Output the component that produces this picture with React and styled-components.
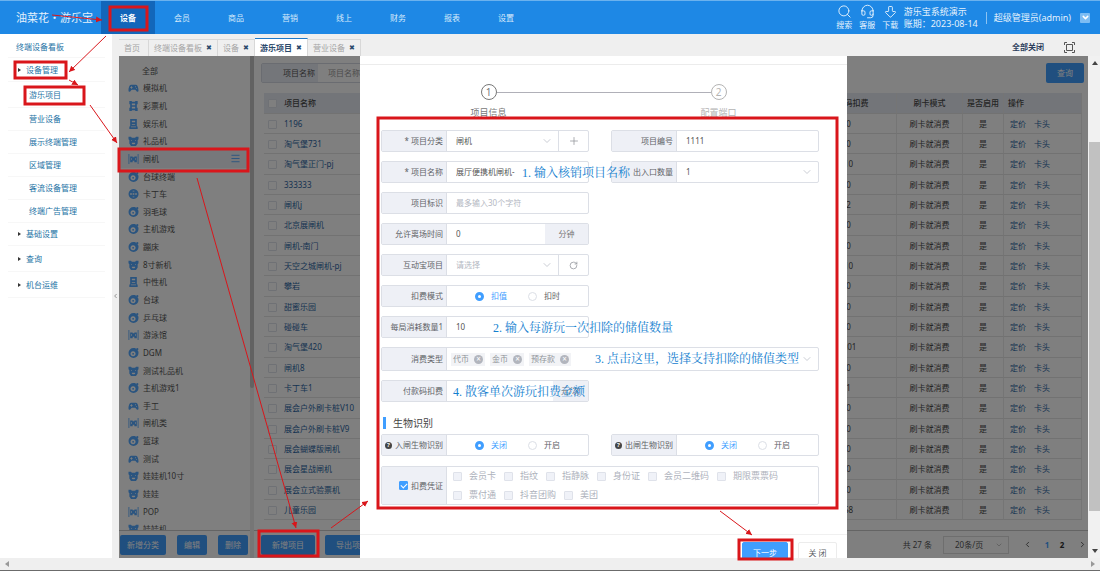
import React from 'react';
import styled, { createGlobalStyle } from 'styled-components';
import { Search, Headset, ArrowBigDown, ChevronDown, ChevronLeft, ChevronRight, Plus, RotateCw, Menu } from 'lucide-react';

const GlobalStyle = createGlobalStyle`
  * { box-sizing: border-box; }
  body { margin: 0; }
  body, button, input, select {
    font-family: "Noto Sans", "Noto Sans CJK SC", sans-serif;
    font-size: 8px;
    line-height: 12px;
    color: #555;
  }
  button, input, select { margin: 0; padding: 0; border: 0; background: none; outline: none; }
  a { text-decoration: none; }
  ul { list-style: none; margin: 0; padding: 0; }
`;

const Page = styled.div`
  position: relative;
  display: flex;
  flex-direction: column;
  height: 100vh;
  overflow: hidden;
  background: #fff;
`;

/* header */

const Header = styled.header`
  display: flex;
  flex: none;
  height: 34px;
  border-top: 1px solid #6bb2ee;
  background: #1e88e5;
  color: #e4f1fc;
`;

const Brand = styled.div`
  width: 101px;
  padding-left: 16px;
  font-size: 11px;
  line-height: 33px;
  white-space: nowrap;
`;

const Nav = styled.nav`
  display: flex;
`;

const NavLink = styled.a`
  width: 54px;
  line-height: 34px;
  text-align: center;
  color: ${props => (props.$active ? '#fff' : '#d6eafb')};
  font-weight: ${props => (props.$active ? 'bold' : 'normal')};
  background: ${props => (props.$active ? '#1266ba' : 'transparent')};
`;

const HeaderTools = styled.div`
  display: flex;
  align-items: center;
  margin-left: auto;
  padding-right: 10px;
`;

const ToolButton = styled.button`
  display: flex;
  flex-direction: column;
  align-items: center;
  width: 23px;
  color: #e4f1fc;
`;

const SystemInfo = styled.div`
  margin-left: 2px;
  padding-right: 8px;
  font-size: 9px;
  white-space: nowrap;
`;

const UserInfo = styled.div`
  display: flex;
  align-items: center;
  gap: 9px;
  padding-left: 7px;
  border-left: 1px solid #8cc3f2;
  font-size: 9px;
  white-space: nowrap;
`;

const UserMenu = styled.button`
  display: flex;
  align-items: center;
  justify-content: center;
  width: 10px;
  height: 10px;
  border-radius: 1px;
  background: #7cbcf3;
  color: #fff;
`;

/* side menu */

const Body = styled.div`
  display: flex;
  flex: 1;
  min-height: 0;
`;

const Sidebar = styled.aside`
  flex: none;
  width: 112px;
  padding: 2px 7px 0 8px;
`;

const MenuItem = styled.li`
  display: flex;
  align-items: center;
  height: ${props => props.$height}px;
  padding-left: ${props => ({ top: 8, group: 10, child: 21 })[props.$kind]}px;
  border-bottom: 1px solid #f7f7f7;

  a { color: #2573a5; }
`;

const Caret = styled.span`
  width: 3px;
  height: 4px;
  margin-right: 5px;
  border-left: 3px solid #333;
  border-top: 2px solid transparent;
  border-bottom: 2px solid transparent;
`;

const Collapse = styled.button`
  display: flex;
  align-items: center;
  justify-content: center;
  flex: none;
  width: 7px;
  background: #efefef;
`;

const Main = styled.main`
  display: flex;
  flex-direction: column;
  flex: 1;
  min-width: 0;
`;

const TabBar = styled.div`
  display: flex;
  align-items: flex-end;
  flex: none;
  height: 22px;
  background: #efefef;
`;

const Tab = styled.div`
  display: flex;
  align-items: center;
  gap: 4px;
  height: 17px;
  padding: 0 ${props => (props.$closable ? 5 : 8)}px 0 5px;
  border: 1px solid #d8d8d8;
  border-width: 1px 1px 0 0;
  white-space: nowrap;
  color: ${props => (props.$active ? '#2b4a6c' : '#a5a5a5')};
  font-weight: ${props => (props.$active ? 'bold' : 'normal')};
  ${props => props.$active && 'height: 18px; background: #fff; border-top: 1px solid #1e78c8;'}

  button { color: #2b4a6c; font-size: 7px; }
`;

const TabActions = styled.div`
  display: flex;
  align-items: center;
  gap: 20px;
  height: 18px;
  margin-left: auto;
  padding-right: 25px;

  button { display: flex; color: #2b3d5c; font-weight: bold; }
`;

const Content = styled.div`
  display: flex;
  flex: 1;
  min-height: 0;
`;

const Workspace = styled.div`
  position: relative;
  display: flex;
  flex: 1;
  min-width: 0;
  overflow: hidden;
`;

/* category list */

const Categories = styled.section`
  display: flex;
  flex-direction: column;
  flex: none;
  width: 131px;
`;

const CategoryScroll = styled.div`
  flex: 1;
  min-height: 0;
  overflow: hidden;
  padding-top: 6px;
`;

const CategoryList = styled.ul`
  display: grid;
  grid-template-rows: repeat(27, 1fr);
  height: 476px;
`;

const Category = styled.li`
  display: flex;
  align-items: center;
  gap: 4px;
  padding: 0 9px;
  color: #555;
  background: ${props => (props.$active ? '#eef1f6' : 'transparent')};

  svg { flex: none; color: #55a8ff; }
  svg:last-child:not(:first-child) { margin-left: auto; }
`;

const IconGap = styled.span`
  width: 10px;
`;

const ActionBar = styled.div`
  display: flex;
  align-items: center;
  flex: none;
  height: 28px;
  padding-left: ${props => props.$left}px;
  gap: ${props => props.$gap}px;
  border-top: 1px solid #c8c8c8;
`;

const PrimaryButton = styled.button`
  height: 20px;
  padding: 0 ${props => props.$pad}px;
  border-radius: 2px;
  background: #409eff;
  color: #fff;
  white-space: nowrap;
`;

const Splitter = styled.div`
  flex: none;
  width: 4px;
  background: #ececec;

  div { height: 332px; background: #c4c4c4; border-radius: 0 0 2px 2px; }
`;

/* project table */

const Projects = styled.section`
  display: flex;
  flex-direction: column;
  flex: 1;
  min-width: 0;
`;

const Toolbar = styled.div`
  display: flex;
  justify-content: space-between;
  padding: 7px 4px 10px 7px;
`;

const SearchField = styled.div`
  display: flex;
  width: 220px;
  height: 20px;
  border: 1px solid #d5d9e2;
  border-radius: 2px;

  label { width: 56px; padding-right: 3px; line-height: 18px; text-align: right; background: #e9edf4; }
  input { flex: 1; min-width: 0; padding-left: 10px; }
  input::placeholder { color: #999; }
`;

const TableArea = styled.div`
  flex: 1;
  min-height: 0;
  overflow: hidden;
  padding: 0 6px 0 10px;
`;

const Table = styled.table`
  width: 100%;
  table-layout: fixed;
  border-collapse: separate;
  border-spacing: 0;
  white-space: nowrap;

  th, td {
    height: 20px;
    padding: 0;
    border-bottom: 1px solid #e4e4e4;
    border-right: 1px solid #eaeaea;
    text-align: center;
    color: #4a4a4a;
  }
  th { height: 21px; background: #e6ebf3; font-weight: 500; }
  tr:nth-child(3n) td { height: 21px; }
  th:nth-child(1), td:nth-child(1) { border-right: 0; }
  th:nth-child(2), td:nth-child(2), th:nth-child(6), td:nth-child(6) { text-align: left; padding-left: 4px; }
  td:nth-child(6) { padding-left: 6px; }
  a { color: #2d66a3; }
  a + a { margin-left: 8px; }
`;

const Check = styled.input.attrs({ type: 'checkbox' })`
  appearance: none;
  display: inline-block;
  flex: none;
  width: 9px;
  height: 9px;
  border: 1px solid #dfe2ea;
  border-radius: 1px;
  background: ${props => props.$fill || '#fff'};
  vertical-align: middle;

  &:checked {
    border-color: #409eff;
    background: #409eff;
  }
  &:checked::after {
    content: "";
    display: block;
    width: 5px;
    height: 3px;
    margin: 1px;
    border: solid #fff;
    border-width: 0 0 1px 1px;
    transform: rotate(-45deg);
  }
`;

const Pager = styled.div`
  display: flex;
  align-items: center;
  margin-left: auto;
  height: 100%;
  white-space: nowrap;

  button { width: 12px; margin-right: 3px; font-weight: bold; color: #303133; }
  button svg { display: block; margin: 0 auto; }
  button:first-of-type { margin-right: 8px; }
  button:last-of-type { margin: 0 0 0 5px; }
  button[aria-current] { color: #409eff; }
`;

const PageSize = styled.div`
  display: flex;
  align-items: center;
  width: 66px;
  height: 18px;
  margin: 0 12px 0 11px;
  border: 1px solid #ddd;
  padding: 0 5px 0 11px;

  select { appearance: none; flex: 1; }
`;

/* dialog */

const Overlay = styled.div`
  position: absolute;
  inset: 0;
  display: flex;
  justify-content: center;
  background: rgba(0, 0, 0, 0.5);
`;

const Dialog = styled.section`
  display: flex;
  flex-direction: column;
  width: 487px;
  padding-top: 8px;
  background: #fff;
`;

const Steps = styled.ol`
  display: flex;
  flex: none;
  height: 53px;
  margin: 0;
  padding: 19px 0 0;
  overflow: hidden;
  border-top: 1px solid #ececec;
  list-style: none;
  justify-content: center;
`;

const Step = styled.li`
  display: flex;
  flex-direction: column;
  align-items: center;
  gap: 7px;
  width: 40px;
  font-size: 9px;
  color: ${props => (props.$active ? '#777' : '#b4b4b4')};

  b {
    width: 16px;
    height: 16px;
    border: 1px solid currentColor;
    border-radius: 50%;
    font-weight: normal;
    font-size: 10px;
    line-height: 14px;
    text-align: center;
  }
`;

const StepLine = styled.li`
  width: 214px;
  height: 1px;
  margin: 8px -12px 0;
  background: #b0b0b8;
`;

const Form = styled.form`
  flex: 1;
  min-height: 0;
  padding: 13px 28px 0 21px;
`;

const Fields = styled.div`
  display: grid;
  grid-template-columns: repeat(2, minmax(0, 1fr));
  gap: 9px 22px;
`;

const Field = styled.div`
  position: relative;
  display: flex;
  grid-column: ${props => ({ left: '1', right: '2', full: '1 / -1' })[props.$col || 'left']};
  height: ${props => props.$height || 22}px;
  border: 1px solid #dcdfe6;
  border-radius: 2px;
`;

const FieldLabel = styled.div`
  display: flex;
  align-items: center;
  justify-content: flex-end;
  gap: 3px;
  flex: none;
  width: 65px;
  padding-right: 3px;
  border-right: 1px solid #dcdfe6;
  background: #eef0f6;
  color: #606266;
  white-space: nowrap;
`;

const TextInput = styled.input`
  flex: 1;
  min-width: 0;
  padding-left: 9px;

  &::placeholder { color: #b4b8c2; }
`;

const Select = styled.select`
  appearance: none;
  flex: 1;
  min-width: 0;
  padding-left: 9px;
  color: ${props => (props.$empty ? '#b4b8c2' : '#555')};
`;

const Arrow = styled(ChevronDown).attrs({ size: 12, strokeWidth: 1.5, color: '#b8bcc6' })`
  flex: none;
  align-self: center;
  margin-right: 5px;
`;

const SideButton = styled.button.attrs({ type: 'button' })`
  display: flex;
  align-items: center;
  justify-content: center;
  width: 30px;
  border-left: 1px solid #dcdfe6;
  color: #909399;
`;

const Unit = styled.span`
  display: flex;
  align-items: center;
  justify-content: center;
  flex: none;
  width: ${props => props.$width}px;
  background: #eef0f6;
  color: #777;
`;

const RadioGroup = styled.div`
  display: flex;
  align-items: center;
  gap: 21px;
  padding-left: 28px;
`;

const RadioLabel = styled.label`
  display: flex;
  align-items: center;
  gap: 7px;
  color: ${props => (props.$on ? '#409eff' : '#606266')};

  input {
    appearance: none;
    width: 9px;
    height: 9px;
    border: 1px solid #dcdfe6;
    border-radius: 50%;
  }
  input:checked { border: 3px solid #409eff; }
`;

const Tags = styled.div`
  display: flex;
  align-items: center;
  flex: 1;
  gap: 5px;
  padding-left: 4px;
`;

const Tag = styled.span`
  display: flex;
  align-items: center;
  gap: 5px;
  height: 13px;
  padding: 0 2px;
  background: #f2f3f6;
  color: #909399;

  button {
    width: 9px;
    height: 9px;
    border-radius: 50%;
    background: #b2b5bd;
    color: #fff;
    line-height: 8px;
  }
`;

const SectionTitle = styled.h3`
  margin: 15px 0 5px 2px;
  padding-left: 7px;
  border-left: 3px solid #409eff;
  font-size: 10px;
  font-weight: normal;
  line-height: 12px;
  color: #444;
`;

const Help = styled.span`
  width: 7px;
  height: 7px;
  border-radius: 50%;
  background: #444;
  color: #fff;
  font-size: 6px;
  font-weight: bold;
  line-height: 7px;
  text-align: center;
`;

const CheckGroup = styled.div`
  display: flex;
  flex-wrap: wrap;
  align-content: center;
  flex: 1;
  column-gap: 8px;
  padding-left: 6px;

  label {
    display: flex;
    align-items: center;
    gap: 7px;
    height: 19px;
    font-size: 9px;
    color: #aeb2bc;
  }
`;

const Credential = styled.div`
  margin-top: 10px;
`;

const DialogFooter = styled.footer`
  display: flex;
  flex: none;
  gap: 10px;
  justify-content: flex-end;
  align-items: flex-start;
  height: 24px;
  padding: 7px 10px 0 0;
  border-top: 1px solid #f0f0f0;
  overflow: hidden;
`;

const FooterButton = styled.button`
  flex: none;
  width: ${props => (props.$primary ? 46 : 39)}px;
  height: 22px;
  border: 1px solid ${props => (props.$primary ? '#409eff' : '#ececec')};
  border-radius: 2px;
  background: ${props => (props.$primary ? '#409eff' : '#fff')};
  color: ${props => (props.$primary ? '#fff' : '#606266')};
`;

const Note = styled.span`
  position: absolute;
  z-index: 1;
  top: 0;
  left: ${props => props.$left}px;
  font-family: "Liberation Serif", "Noto Serif CJK SC", "Noto Sans CJK SC", serif;
  font-size: 12px;
  line-height: 22px;
  white-space: nowrap;
  color: #1480cf;
`;

/* scroll bars */

const VerticalScroll = styled.div`
  display: flex;
  flex-direction: column;
  align-items: center;
  justify-content: space-between;
  flex: none;
  width: 12px;
  padding: 4px 0 4px 1px;
  background: #f1f1f1;

  div { width: 100%; height: 369px; margin-top: 39px; background: #c1c1c1; }
`;

const HorizontalScroll = styled.div`
  display: flex;
  align-items: center;
  justify-content: space-between;
  flex: none;
  height: 13px;
  padding: 0 4px;
  border-bottom: 1px solid #6b6b6b;
  background: #efefef;
`;

const Marks = styled.svg`
  position: absolute;
  top: 0;
  left: 0;
  pointer-events: none;
`;

const navItems = ['设备', '会员', '商品', '营销', '线上', '财务', '报表', '设置'];

const menu = [
  ['终端设备看板', 'top', 22],
  ['设备管理', 'group', 24],
  ['游乐项目', 'child', 26],
  ['营业设备', 'child', 23],
  ['展示终端管理', 'child', 23],
  ['区域管理', 'child', 23],
  ['客流设备管理', 'child', 23],
  ['终端广告管理', 'child', 23],
  ['基础设置', 'group', 23],
  ['查询', 'group', 26],
  ['机台运维', 'group', 26],
];

const tabs = ['首页', '终端设备看板', '设备', '游乐项目', '营业设备'];

const categories = [
  ['全部'], ['模拟机', 'game'], ['彩票机', 'ticket'], ['娱乐机', 'machine'], ['礼品机', 'bear'],
  ['闸机', 'gate'], ['台球终端', 'ball'], ['卡丁车', 'wheel'], ['羽毛球', 'ball'], ['主机游戏', 'ball'],
  ['蹦床', 'ball'], ['8寸新机', 'bear'], ['中性机', 'machine'], ['台球', 'ball'], ['乒乓球', 'ball'],
  ['游泳馆', 'gate'], ['DGM', 'ball'], ['测试礼品机', 'bear'], ['主机游戏1', 'ball'], ['手工', 'game'],
  ['闸机类', 'gate'], ['篮球', 'ball'], ['测试', 'game'], ['娃娃机10寸', 'bear'], ['娃娃', 'bear'],
  ['POP', 'gate'], ['娃娃机', 'bear'],
];

const projects = [
  ['1196', '0'], ['淘气堡731', '0'], ['淘气堡正门-pj', '10'], ['333333', '0'],
  ['闸机j', '2'], ['北京展闸机', '0'], ['闸机-南门', '0'], ['天空之城闸机-pj', '10'],
  ['攀岩', '0'], ['甜蜜乐园', '0'], ['碰碰车', '0'], ['淘气堡420', '0.01'],
  ['闸机8', '0'], ['卡丁车1', '1'], ['展会户外刷卡桩V10', '0'], ['展会户外刷卡桩V9', '0'],
  ['展会蝴蝶版闸机', '0'], ['展会星战闸机', '0'], ['展会立式验票机', '0'], ['儿童乐园', '58'],
];

const credentials = ['会员卡', '指纹', '指静脉', '身份证', '会员二维码', '期限票票码', '票付通', '抖音团购', '美团'];

const iconShapes = {
  game: <path fillRule="evenodd" d="M3 2h6c2 0 3 4 3 7 0 2-2 2-3 0l-1-1H4L3 9c-1 2-3 2-3 0 0-3 1-7 3-7zm0 2v1H2v1h1v1h1V6h1V5H4V4zm5 0v1h1V4zm1 2v1h1V6z" />,
  ticket: <path fillRule="evenodd" d="M1 0h3v1h4V0h3v4h-1v4h1v4H8v-1H4v1H1V8h1V4H1zm3 3v2h4V3zm0 4v2h4V7z" />,
  machine: <path fillRule="evenodd" d="M2 0h8v9h1v3H1V9h1zm2 2v2h4V2zm0 4v1h4V6zM3 9v1h6V9z" />,
  bear: <path fillRule="evenodd" d="M0 1h3l1 1h4l1-1h3v3l-1 1v4l-2 3H3L1 9V5L0 4zm3 4v1h1V5zm5 0v1h1V5zM4 8v1l1 1h2l1-1V8z" />,
  gate: <path fillRule="evenodd" d="M0 0h1v12H0zM11 0h1v12h-1zM2 3h3v1h2V3h3v7H7V8H5v2H2zm1 2v2h1V5zm5 0v2h1V5z" />,
  ball: <path fillRule="evenodd" d="M6 0a6 6 0 1 0 6 6c0-1 0-2-1-3A2 2 0 0 1 9 1C8 0 7 0 6 0zM5.500 4a3 3 0 1 1-.1 0zM5.500 6a1 1 0 1 0 .1 0zM10.500 0a1.300 1.300 0 1 0 .1 0z" />,
  wheel: <path fillRule="evenodd" d="M6 0a6 6 0 1 0 .1 0zM5 2h2v1H5zM2 5h2v2H2zm3 0h2v2H5zm3 0h2v2H8zM5 9h2v1H5z" />,
};

const CategoryIcon = ({ name }) => (
  <svg width="11" height="10" viewBox="0 0 12 12" fill="currentColor">{iconShapes[name]}</svg>
);

const FullscreenIcon = () => (
  <svg width="11" height="11" viewBox="0 0 11 11" fill="none" stroke="#555">
    <path d="M2.500 2.500h6v6h-6zM.5 3V.5H3M8 .5h2.500V3M10.500 8v2.500H8M3 10.500H.5V8" />
  </svg>
);

const Triangle = ({ points, color }) => (
  <svg width="6" height="6" viewBox="0 0 6 6"><polygon points={points} fill={color} /></svg>
);

const RadioPair = ({ name, options }) => (
  <RadioGroup>
    {options.map((option, i) => (
      <RadioLabel key={option} $on={i === 0}>
        <input type="radio" name={name} defaultChecked={i === 0} />
        {option}
      </RadioLabel>
    ))}
  </RadioGroup>
);

const ProjectForm = () => (
  <Form>
    <Fields>
      <Field>
        <FieldLabel as="label" htmlFor="type">* 项目分类</FieldLabel>
        <Select id="type"><option>闸机</option></Select>
        <Arrow />
        <SideButton aria-label="新增"><Plus size={12} strokeWidth={1.5} /></SideButton>
      </Field>
      <Field $col="right">
        <FieldLabel as="label" htmlFor="code">项目编号</FieldLabel>
        <TextInput id="code" defaultValue="1111" />
      </Field>
      <Field>
        <FieldLabel as="label" htmlFor="name">* 项目名称</FieldLabel>
        <TextInput id="name" defaultValue="展厅便携机闸机-" />
        <Note $left={140}>1. 输入核销项目名称</Note>
      </Field>
      <Field $col="right">
        <FieldLabel as="label" htmlFor="gates">出入口数量</FieldLabel>
        <Select id="gates"><option>1</option></Select>
        <Arrow />
      </Field>
      <Field>
        <FieldLabel as="label" htmlFor="mark">项目标识</FieldLabel>
        <TextInput id="mark" placeholder="最多输入30个字符" />
      </Field>
      <Field>
        <FieldLabel as="label" htmlFor="leave">允许离场时间</FieldLabel>
        <TextInput id="leave" defaultValue="0" />
        <Unit $width={43}>分钟</Unit>
      </Field>
      <Field>
        <FieldLabel as="label" htmlFor="interactive">互动宝项目</FieldLabel>
        <Select id="interactive" $empty><option>请选择</option></Select>
        <Arrow />
        <SideButton aria-label="刷新"><RotateCw size={9} /></SideButton>
      </Field>
      <Field>
        <FieldLabel>扣费模式</FieldLabel>
        <RadioPair name="mode" options={['扣值', '扣时']} />
      </Field>
      <Field>
        <FieldLabel as="label" htmlFor="amount">每局消耗数量1</FieldLabel>
        <TextInput id="amount" defaultValue="10" />
        <Note $left={111}>2. 输入每游玩一次扣除的储值数量</Note>
      </Field>
      <Field $col="full" $height={24}>
        <FieldLabel>消费类型</FieldLabel>
        <Tags>
          {['代币', '金币', '预存款'].map(tag => (
            <Tag key={tag}>{tag}<button type="button">×</button></Tag>
          ))}
        </Tags>
        <Arrow />
        <Note $left={213}>3. 点击这里，选择支持扣除的储值类型</Note>
      </Field>
      <Field>
        <FieldLabel as="label" htmlFor="pay">付款码扣费</FieldLabel>
        <TextInput id="pay" />
        <Unit $width={35}>元/次</Unit>
        <Note $left={71}>4. 散客单次游玩扣费金额</Note>
      </Field>
    </Fields>
    <SectionTitle>生物识别</SectionTitle>
    <Fields>
      <Field>
        <FieldLabel><Help>?</Help>入闸生物识别</FieldLabel>
        <RadioPair name="in" options={['关闭', '开启']} />
      </Field>
      <Field $col="right">
        <FieldLabel><Help>?</Help>出闸生物识别</FieldLabel>
        <RadioPair name="out" options={['关闭', '开启']} />
      </Field>
    </Fields>
    <Credential>
      <Field $height={39}>
        <FieldLabel as="label"><Check defaultChecked />扣费凭证</FieldLabel>
        <CheckGroup>
          {credentials.map(item => (
            <label key={item}><Check disabled $fill="#f0f2f8" />{item}</label>
          ))}
        </CheckGroup>
      </Field>
    </Credential>
  </Form>
);

const arrows = [
  [52, 15, 102, 20],
  [106, 36, 69, 72],
  [69, 80, 78, 85],
  [90, 105, 117, 143],
  [197, 178, 296, 528],
  [331, 528, 368, 501],
  [720, 511, 752, 535],
];

const boxes = [
  [110, 7, 37, 23],
  [15, 62, 51, 16],
  [25, 87, 59, 17],
  [119, 149, 129, 22],
  [259, 531, 59, 25],
  [378, 118, 459, 390],
  [739, 540, 53, 19],
];

const App = () => (
  <Page>
    <GlobalStyle />
    <Header>
      <Brand>油菜花・游乐宝</Brand>
      <Nav>
        {navItems.map((item, i) => (
          <NavLink key={item} href="#" $active={i === 0}>{item}</NavLink>
        ))}
      </Nav>
      <HeaderTools>
        <ToolButton><Search size={15} strokeWidth={1.5} />搜索</ToolButton>
        <ToolButton><Headset size={15} strokeWidth={1.5} />客服</ToolButton>
        <ToolButton><ArrowBigDown size={15} strokeWidth={1.5} />下载</ToolButton>
        <SystemInfo>游乐宝系统演示<br />账期：2023-08-14</SystemInfo>
        <UserInfo>
          超级管理员(admin)
          <UserMenu aria-label="菜单"><ChevronDown size={9} strokeWidth={4} /></UserMenu>
        </UserInfo>
      </HeaderTools>
    </Header>
    <Body>
      <Sidebar>
        <ul>
          {menu.map(([text, kind, height]) => (
            <MenuItem key={text} $kind={kind} $height={height}>
              {kind === 'group' && <Caret />}
              <a href="#">{text}</a>
            </MenuItem>
          ))}
        </ul>
      </Sidebar>
      <Collapse aria-label="收起"><ChevronLeft size={8} /></Collapse>
      <Main>
        <TabBar>
          {tabs.map((tab, i) => (
            <Tab key={tab} $active={i === 3} $closable={i > 0}>{tab}{i > 0 && <button>✖</button>}</Tab>
          ))}
          <TabActions>
            <button>全部关闭</button>
            <button aria-label="全屏"><FullscreenIcon /></button>
          </TabActions>
        </TabBar>
        <Content>
          <Workspace>
            <Categories>
              <CategoryScroll>
                <CategoryList>
                  {categories.map(([text, icon]) => (
                    <Category key={text} $active={text === '闸机'}>
                      {icon ? <CategoryIcon name={icon} /> : <IconGap />}
                      {text}
                      {text === '闸机' && <Menu size={11} />}
                    </Category>
                  ))}
                </CategoryList>
              </CategoryScroll>
              <ActionBar $left={1} $gap={11}>
                <PrimaryButton $pad={7}>新增分类</PrimaryButton>
                <PrimaryButton $pad={7}>编辑</PrimaryButton>
                <PrimaryButton $pad={7}>删除</PrimaryButton>
              </ActionBar>
            </Categories>
            <Splitter><div /></Splitter>
            <Projects>
              <Toolbar>
                <SearchField>
                  <label htmlFor="search">项目名称</label>
                  <input id="search" placeholder="项目名称" />
                </SearchField>
                <PrimaryButton $pad={11}>查询</PrimaryButton>
              </Toolbar>
              <TableArea>
                <Table>
                  <colgroup>
                    <col width="16" /><col /><col width="96" /><col width="66" /><col width="41" /><col width="78" />
                  </colgroup>
                  <thead>
                    <tr>
                      <th><Check aria-label="全选" /></th>
                      <th>项目名称</th>
                      <th>付款码扣费</th>
                      <th>刷卡模式</th>
                      <th>是否启用</th>
                      <th>操作</th>
                    </tr>
                  </thead>
                  <tbody>
                    {projects.map(([name, fee]) => (
                      <tr key={name}>
                        <td><Check aria-label={name} /></td>
                        <td><a href="#">{name}</a></td>
                        <td>{fee}</td>
                        <td>刷卡就消费</td>
                        <td>是</td>
                        <td><a href="#">定价</a><a href="#">卡头</a></td>
                      </tr>
                    ))}
                  </tbody>
                </Table>
              </TableArea>
              <ActionBar $left={7} $gap={10}>
                <PrimaryButton $pad={11}>新增项目</PrimaryButton>
                <PrimaryButton $pad={11}>导出项目</PrimaryButton>
                <Pager>
                  共 27 条
                  <PageSize>
                    <select aria-label="每页条数"><option>20条/页</option></select>
                    <ChevronDown size={8} color="#aaa" />
                  </PageSize>
                  <button aria-label="上一页"><ChevronLeft size={9} /></button>
                  <button aria-current="page">1</button>
                  <button>2</button>
                  <button aria-label="下一页"><ChevronRight size={9} /></button>
                </Pager>
              </ActionBar>
            </Projects>
            <Overlay>
              <Dialog role="dialog">
                <Steps>
                  <Step $active><b>1</b>项目信息</Step>
                  <StepLine />
                  <Step><b>2</b>配置端口</Step>
                </Steps>
                <ProjectForm />
                <DialogFooter>
                  <FooterButton $primary>下一步</FooterButton>
                  <FooterButton>关 闭</FooterButton>
                </DialogFooter>
              </Dialog>
            </Overlay>
          </Workspace>
          <VerticalScroll>
            <Triangle points="0,5 3,1 6,5" color="#444" />
            <div />
            <Triangle points="0,1 6,1 3,5" color="#444" />
          </VerticalScroll>
        </Content>
      </Main>
    </Body>
    <HorizontalScroll>
      <Triangle points="5,0 5,6 1,3" color="#999" />
      <Triangle points="1,0 1,6 5,3" color="#999" />
    </HorizontalScroll>
    <Marks width="1100" height="571" fill="none" stroke="#d9161b">
      <defs>
        <marker id="head" markerWidth="8" markerHeight="8" refX="6" refY="3" orient="auto">
          <path d="M0 0L6 3L0 6z" fill="#d9161b" stroke="none" />
        </marker>
      </defs>
      {arrows.map(([x1, y1, x2, y2]) => (
        <line key={x1 + '-' + y1} x1={x1} y1={y1} x2={x2} y2={y2} markerEnd="url(#head)" />
      ))}
      {boxes.map(([x, y, width, height]) => (
        <rect key={x + '-' + y} x={x} y={y} width={width} height={height} strokeWidth="3" />
      ))}
    </Marks>
  </Page>
);

export default App;
